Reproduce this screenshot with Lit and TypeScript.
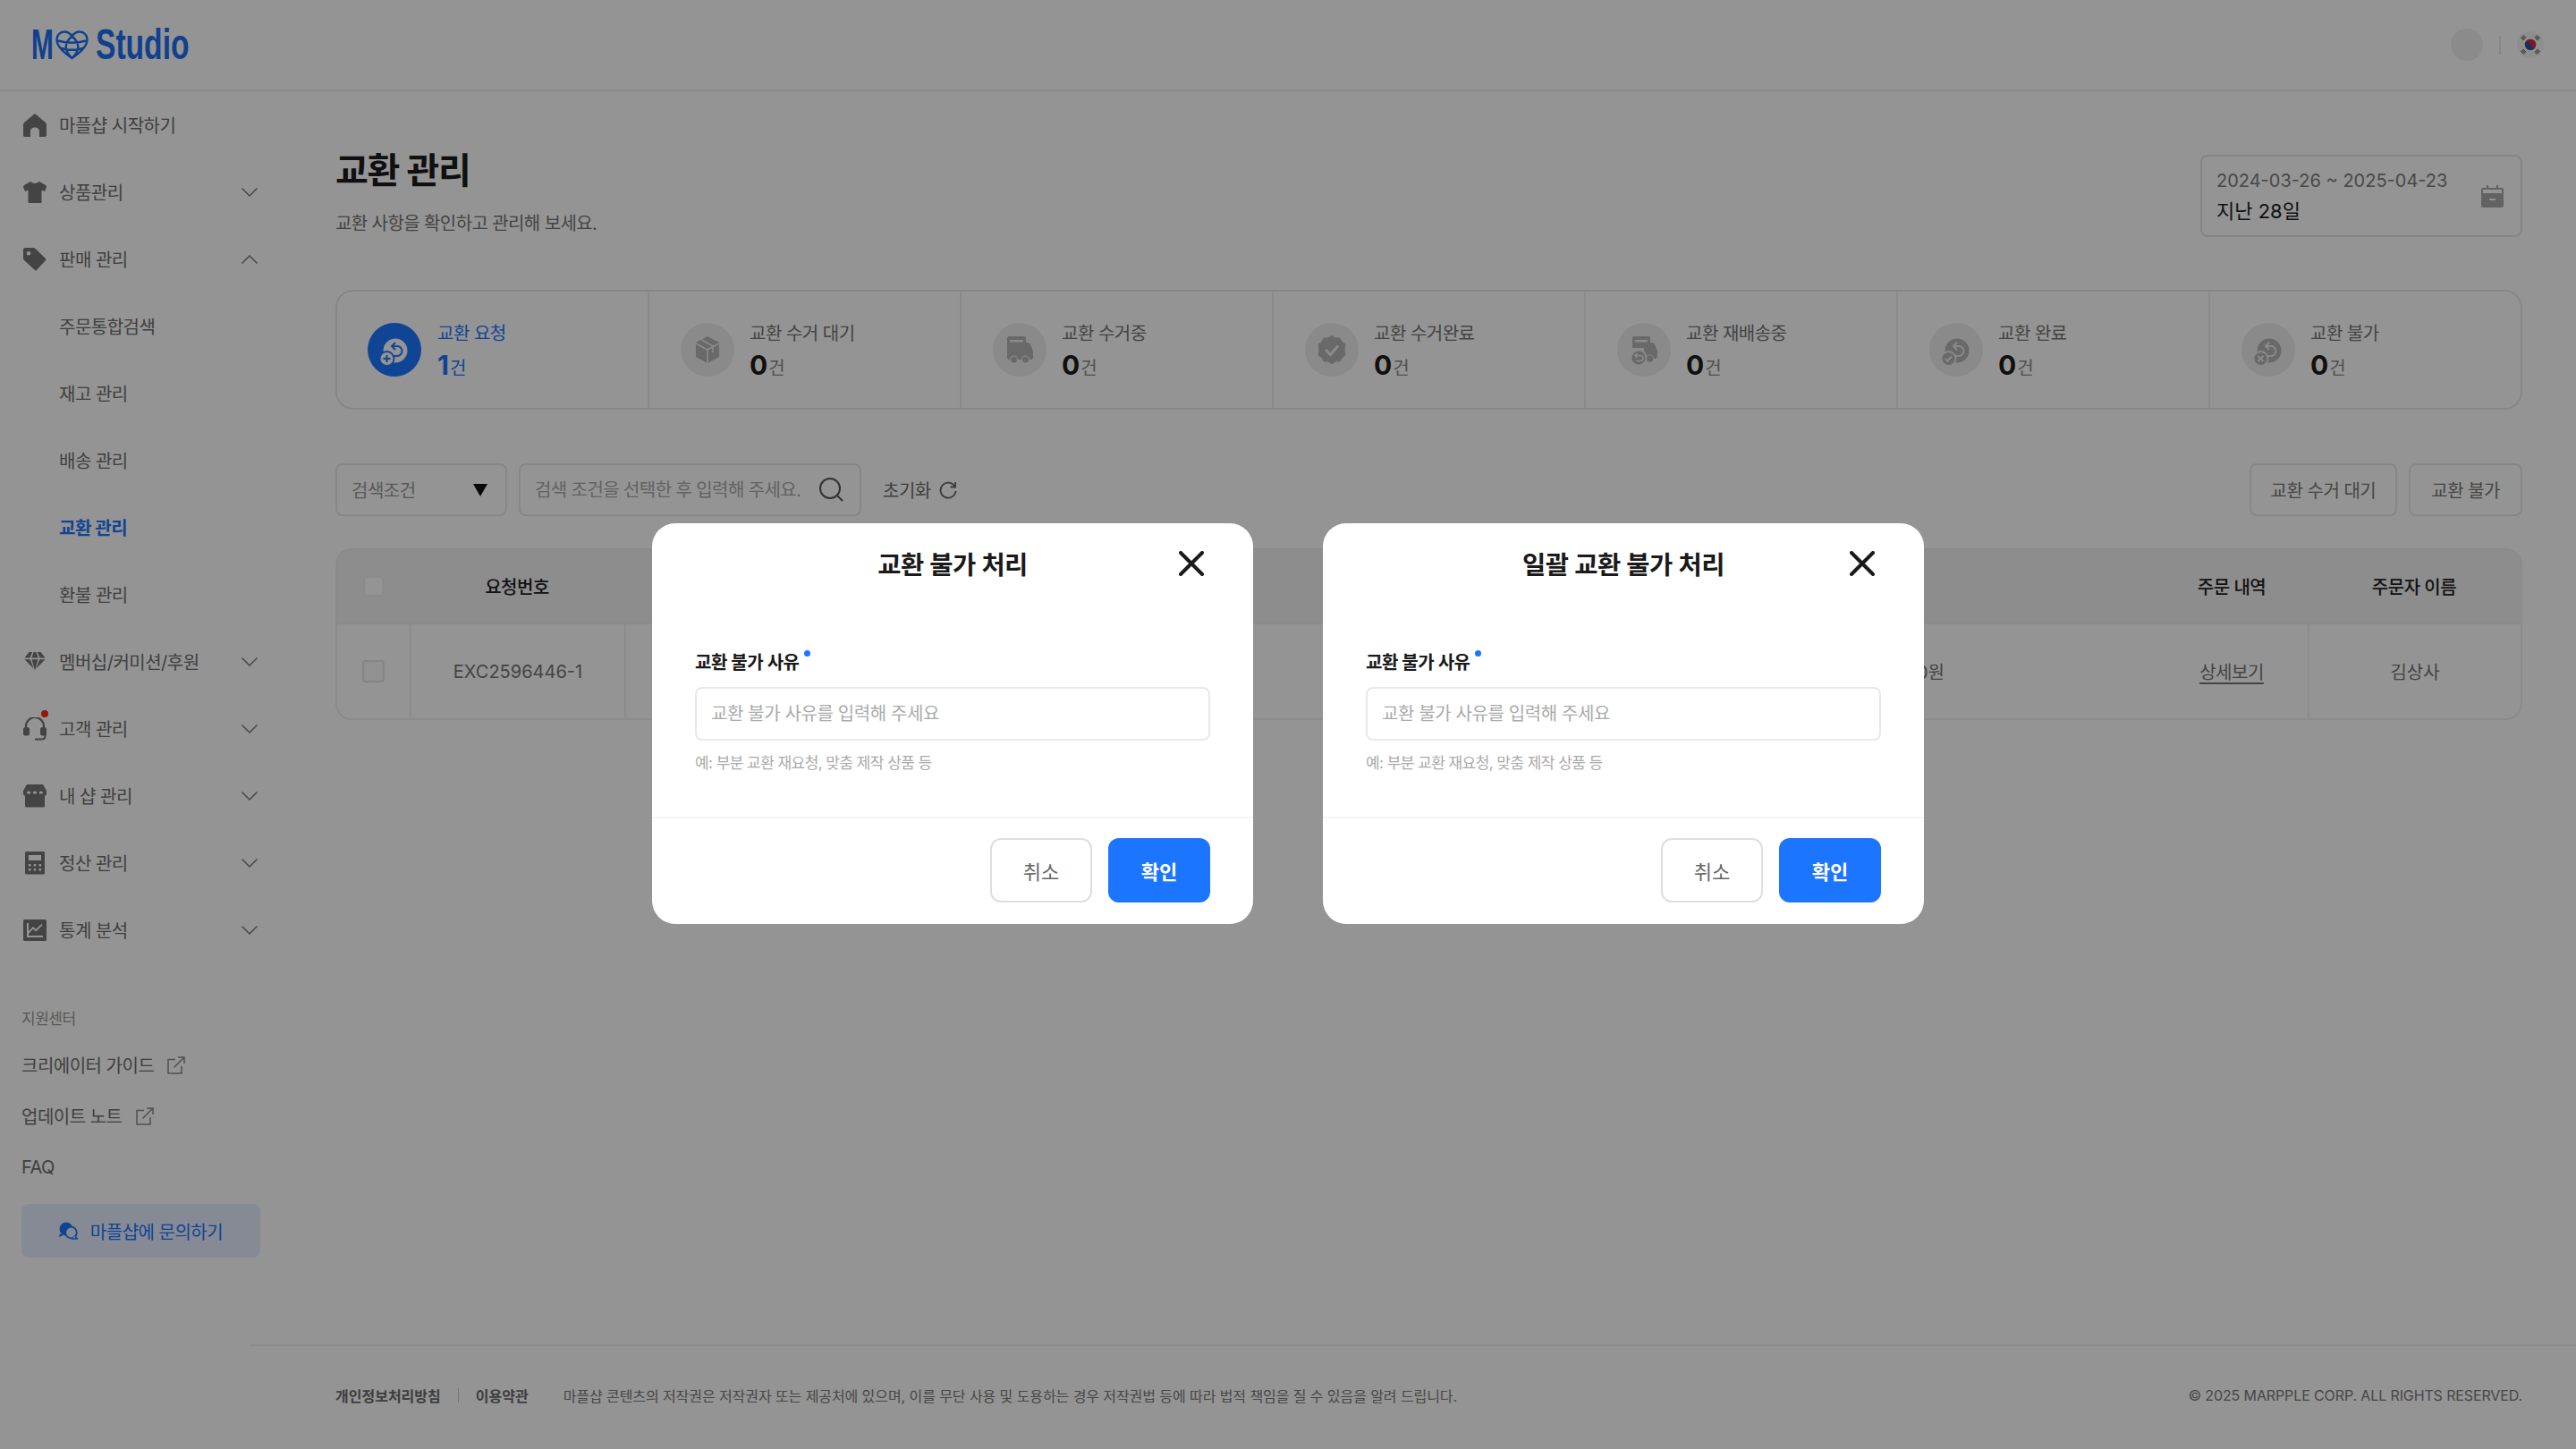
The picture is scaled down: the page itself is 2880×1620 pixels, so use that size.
import { LitElement, html, css, svg } from "lit";
import { customElement } from "lit/decorators.js";

const I = (vb: string, w: number, h: number, body: unknown) =>
  html`<svg width=${w} height=${h} viewBox=${vb} fill="currentColor" xmlns="http://www.w3.org/2000/svg">${body}</svg>`;

const navIcons: Record<string, unknown> = {
  home: I("0 0 26 26", 26, 26, svg`<path fill-rule="evenodd" d="M13 0 L25 10 Q26 11 26 12.5 V24 Q26 26 24 26 H18 V20 Q18 15.5 13 15.5 Q8 15.5 8 20 V26 H2 Q0 26 0 24 V12.5 Q0 11 1 10 Z"/>`),
  tee: I("0 0 26 26", 26, 26, svg`<path d="M8 1 Q13 5 18 1 L25 5 Q26 6 26 7 L24 12 L20.500 10.500 V24 Q20.500 25 19.500 25 H6.500 Q5.500 25 5.500 24 V10.500 L2 12 L0 7 Q0 6 1 5 Z"/>`),
  tag: I("0 0 26 26", 26, 26, svg`<path fill-rule="evenodd" d="M2 0 H11 Q12.500 0 13.500 1 L25 12 Q26 13 25 14 L15 25 Q14 26 13 25 L1 14 Q0 13 0 11.500 V2 Q0 0 2 0 Z M6 4 A2.300 2.300 0 1 0 6 8.600 A2.300 2.300 0 1 0 6 4 Z"/>`),
  gem: I("0 0 26 26", 26, 24, svg`<path d="M6 1 H10 L7 8 H0.500 Z M11.500 1 H14.500 L17 8 H9 Z M16 1 H20 L25.500 8 H19 Z M0.500 10 H7.300 L11.500 21 Z M9.200 10 H16.800 L13 23.500 Z M18.700 10 H25.500 L14.500 21 Z"/>`),
  head: I("0 0 26 26", 26, 26, svg`<path d="M3 12 V10 A10 10 0 0 1 23 10 V12" fill="none" stroke="currentColor" stroke-width="2.200"/><rect x="0" y="11" width="7" height="9.500" rx="2.500"/><rect x="19" y="11" width="7" height="9.500" rx="2.500"/><path d="M24.500 19 V21 Q24.500 24.500 20 24.500 H13" fill="none" stroke="currentColor" stroke-width="2"/>`),
  shop: I("0 0 26 26", 26, 26, svg`<path fill-rule="evenodd" d="M4 0 H22 L26 7 V10 Q26 13 23 13 H24 V24 Q24 25.500 22.500 25.500 H3.500 Q2 25.500 2 24 V13 H3 Q0 13 0 10 V7 Z M4 9 a2.200 1.600 0 1 0 4.400 0 a2.200 1.600 0 1 0 -4.400 0 M10.800 9 a2.200 1.600 0 1 0 4.400 0 a2.200 1.600 0 1 0 -4.400 0 M17.600 9 a2.200 1.600 0 1 0 4.400 0 a2.200 1.600 0 1 0 -4.400 0 Z"/>`),
  calc: I("0 0 26 26", 26, 26, svg`<path fill-rule="evenodd" d="M3.500 0 H22.500 Q24 0 24 1.500 V24 Q24 25.500 22.500 25.500 H3.500 Q2 25.500 2 24 V1.500 Q2 0 3.500 0 Z M6 4 V10 H20 V4 Z M6 14 v2.500 h2.500 v-2.500 Z M11.700 14 v2.500 h2.500 v-2.500 Z M17.500 14 v2.500 h2.500 v-2.500 Z M6 19 v2.500 h2.500 v-2.500 Z M11.700 19 v2.500 h2.500 v-2.500 Z M17.500 19 v2.500 h2.500 v-2.500 Z"/>`),
  chart: I("0 0 26 24", 26, 24, svg`<path fill-rule="evenodd" d="M1.500 0 H24.500 Q26 0 26 1.500 V22.500 Q26 24 24.500 24 H1.500 Q0 24 0 22.500 V1.500 Q0 0 1.500 0 Z M4 4 V20 H22 V18 H6 V16 L11 10.500 L14 13.500 L21.500 6.500 L20.500 5 L14 11 L11 8 L6 13 V4 Z"/>`),
};

const ret = (badge: "plus" | "check" | "x", fg: string, bg: string) => svg`
  <circle cx="31" cy="31" r="13.500" fill=${fg}/>
  <path d="M27 26 H33 A5.500 5.500 0 0 1 33 37 H29 M31 22 L27 26 L31 30" fill="none" stroke=${bg} stroke-width="2"/>
  <circle cx="21.500" cy="40" r="8" fill=${fg} stroke=${bg} stroke-width="1.800"/>
  ${badge === "plus" ? svg`<path d="M17.500 40 H25.500 M21.500 36 V44" stroke=${bg} stroke-width="2"/>` : ""}
  ${badge === "check" ? svg`<path d="M18 40 L20.500 42.500 L25 37.500" fill="none" stroke=${bg} stroke-width="2"/>` : ""}
  ${badge === "x" ? svg`<path d="M18.500 37 L24.500 43 M24.500 37 L18.500 43" stroke=${bg} stroke-width="2"/>` : ""}`;

const G = "#b6b6b6";
const C = "#eeeeee";
const statIcons: unknown[] = [
  ret("plus", "#ffffff", "#1c75ff"),
  svg`<path d="M30 15 L43 22 V38 L30 45 L17 38 V22 Z" fill=${G}/><path d="M17 23 L30 30 L43 23 M30 30 V45 M23 18.500 L36 26 V33" fill="none" stroke=${C} stroke-width="1.600"/>`,
  svg`<path d="M16 17 Q16 15 18 15 H35 Q37 15 37 17 V22 H39 Q41 22 42 24 L45 32 V38 Q45 41 42 41 H41 A4.500 4.500 0 0 0 32 41 H28 A4.500 4.500 0 0 0 19 41 H18 Q16 41 16 39 Z" fill=${G}/><rect x="19" y="19" width="15" height="2.500" fill=${C}/><circle cx="23.500" cy="41" r="3.500" fill=${G}/><circle cx="36.500" cy="41" r="3.500" fill=${G}/>`,
  svg`<path d="M30 14 L34 17 L39 17 L41 21 L45 24 L44 30 L45 36 L41 39 L39 43 L34 43 L30 46 L26 43 L21 43 L19 39 L15 36 L16 30 L15 24 L19 21 L21 17 L26 17 Z" fill=${G} stroke=${G} stroke-linejoin="round" stroke-width="1"/><path d="M23 30 L28.500 35.500 L37 25.500" fill="none" stroke=${C} stroke-width="3"/>`,
  svg`<path d="M17 17 Q17 15 19 15 H35 Q37 15 37 17 V22 H39 Q41 22 42 24 L45 31 V37 Q45 40 42 40 H41 A4.500 4.500 0 0 0 32 40 H30 V28 H17 Z" fill=${G}/><rect x="20" y="19" width="14" height="2.500" fill=${C}/><circle cx="36.500" cy="40" r="3.800" fill=${G}/><circle cx="24" cy="39" r="8.500" fill=${G} stroke=${C} stroke-width="1.800"/><path d="M20 36.500 H26 A3 3 0 0 1 26 42.500 H21 M22.500 34 L20 36.500 L22.500 39" fill="none" stroke=${C} stroke-width="1.600"/>`,
  ret("check", G, C),
  ret("x", G, C),
];

const stats = [
  ["교환 요청", "1"],
  ["교환 수거 대기", "0"],
  ["교환 수거중", "0"],
  ["교환 수거완료", "0"],
  ["교환 재배송중", "0"],
  ["교환 완료", "0"],
  ["교환 불가", "0"],
];

const nav: { t: string; icon?: string; open?: boolean; chev?: boolean; active?: boolean; dot?: boolean }[] = [
  { t: "마플샵 시작하기", icon: "home" },
  { t: "상품관리", icon: "tee", chev: true },
  { t: "판매 관리", icon: "tag", chev: true, open: true },
  { t: "주문통합검색" },
  { t: "재고 관리" },
  { t: "배송 관리" },
  { t: "교환 관리", active: true },
  { t: "환불 관리" },
  { t: "멤버십/커미션/후원", icon: "gem", chev: true },
  { t: "고객 관리", icon: "head", chev: true, dot: true },
  { t: "내 샵 관리", icon: "shop", chev: true },
  { t: "정산 관리", icon: "calc", chev: true },
  { t: "통계 분석", icon: "chart", chev: true },
];

const extIcon = html`<svg width="20" height="20" viewBox="0 0 20 20" fill="none" stroke="currentColor" stroke-width="1.500"><path d="M9 3.500 H1 V19 H16 V11 M7.500 12.500 L19 1 M12 1 H19 V8"/></svg>`;

@customElement("app-root")
export class AppRoot extends LitElement {
  static styles = css`
    :host { display: block; width: 2880px; height: 1620px; position: relative; overflow: hidden; background: #fff;
      font-family: Inter, "Noto Sans CJK KR", sans-serif; letter-spacing: -0.5px; color: #1d1d1d; }
    * { box-sizing: border-box; }
    .hdr { height: 102px; border-bottom: 2px solid #f0f0f0; display: flex; align-items: center; padding: 0 36px 0 35px; }
    .logo { display: flex; align-items: center; color: #1c6ff5; font-family: "Liberation Sans Narrow", "Liberation Sans", sans-serif; font-weight: 700; font-size: 48px; line-height: 48px; letter-spacing: 0; }
    .logo span { display: inline-block; transform-origin: left center; }
    .logo .m { width: 27px; transform: scaleX(.62); }
    .logo .s { width: 103px; margin-left: 8px; transform: scaleX(.7); }
    .hdr-r { margin-left: auto; display: flex; align-items: center; gap: 18px; }
    .avatar { width: 36px; height: 36px; border-radius: 50%; background: #f0f0f0; }
    .sep { width: 2px; height: 21px; background: #e8e8e8; }
    .flag { display: block; }
    .body { display: flex; height: 1518px; }
    .side { width: 300px; flex: none; display: flex; flex-direction: column; }
    .item { height: 75px; display: flex; align-items: center; font-size: 20px; color: #6e6e6e; padding: 0 12px 0 26px; }
    .item.sub { padding-left: 66px; }
    .item.active { color: #1c75ff; font-weight: 600; }
    .ico { width: 26px; height: 26px; margin-right: 14px; color: #757575; position: relative; display: flex; align-items: center; justify-content: center; flex: none; }
    .dot { position: absolute; left: 20px; top: -8px; width: 8px; height: 8px; border-radius: 50%; background: #ff2a10; }
    .chev { margin-left: auto; color: #7d7d7d; display: block; }
    .sup { padding: 50px 0 0 24px; }
    .sup-t { font-size: 17px; line-height: 24px; color: #999; }
    .links { margin-top: 11px; }
    .lnk { height: 57px; display: flex; align-items: center; gap: 15px; font-size: 20px; color: #6e6e6e; }
    .lnk svg { color: #8a8a8a; }
    .ask { margin-top: 13px; width: 267px; height: 60px; border-radius: 8px; background: #e7eeff; color: #1c75ff; display: flex; align-items: center; justify-content: center; gap: 14px; font-size: 20px; }
    .main { flex: 1; display: flex; flex-direction: column; min-width: 0; }
    .content { flex: 1; padding: 65px 60px 0 75px; }
    .top { display: flex; justify-content: space-between; height: 98px; margin-bottom: 59px; }
    h1 { margin: 0; font-size: 40px; line-height: 48px; font-weight: 700; letter-spacing: -1.2px; color: #1d1d1d; }
    .subt { margin-top: 21px; font-size: 20px; line-height: 28px; color: #757575; letter-spacing: -0.6px; }
    .date { margin-top: 6px; width: 360px; height: 92px; border: 2px solid #e6e6e6; border-radius: 8px; padding: 0 19px 0 16px; display: flex; align-items: center; justify-content: space-between; }
    .d1 { font-size: 20px; line-height: 34px; color: #7d7d7d; letter-spacing: 0; }
    .d2 { font-size: 22px; line-height: 34px; color: #1d1d1d; letter-spacing: 0; }
    .cal { color: #aaa; display: block; }
    .stats { height: 134px; border: 2px solid #e8e8e8; border-radius: 20px; display: grid; grid-template-columns: 347px repeat(5, 349px) 1fr; margin-bottom: 60px; }
    .cell { display: flex; align-items: center; padding-left: 35px; gap: 17px; border-left: 2px solid #eeeeee; }
    .cell:first-child { border-left: 0; padding-left: 34px; gap: 18px; }
    .cell svg { display: block; flex: none; }
    .st { padding-top: 10px; }
    .lab { font-size: 20px; line-height: 28px; color: #757575; }
    .val { font-size: 30px; line-height: 42px; font-weight: 700; color: #1d1d1d; display: flex; align-items: baseline; gap: 1px; letter-spacing: 0; }
    .val small { font-size: 20px; font-weight: 400; color: #8a8a8a; }
    .cell.on .lab, .cell.on .val, .cell.on .val small { color: #1c75ff; }
    .bar { display: flex; align-items: center; height: 59px; margin-bottom: 36px; }
    .sel, .srch, .btn { height: 59px; border: 2px solid #e8e8e8; border-radius: 8px; display: flex; align-items: center; font-size: 20px; }
    .sel { width: 192px; padding: 0 20px 0 16px; justify-content: space-between; color: #999; margin-right: 13px; }
    .srch { width: 383px; padding: 0 18px 0 16px; gap: 8px; margin-right: 24px; }
    .srch input { flex: 1; min-width: 0; border: 0; outline: 0; background: none; padding: 0; font: inherit; letter-spacing: -0.6px; }
    .srch input::placeholder { color: #aaa; opacity: 1; }
    .reset { display: flex; align-items: center; gap: 9px; font-size: 20px; color: #6e6e6e; }
    .btns { margin-left: auto; display: flex; gap: 13px; }
    .btn { padding: 0 23px; color: #777; justify-content: center; }
    .btn:first-child { padding: 0 22px; }
    .tbl { border: 2px solid #f0f0f0; border-radius: 18px; height: 192px; overflow: hidden; }
    .tr { display: grid; grid-template-columns: 81px 240px 1542px 170px 170px 1fr; }
    .th { height: 81px; background: #f3f3f3; font-size: 20px; font-weight: 500; color: #222; }
    .th > div, .td > div { display: flex; align-items: center; justify-content: center; }
    .td { height: 107px; border-top: 2px solid #f0f0f0; font-size: 20px; color: #757575; letter-spacing: 0; }
    .td > .ln { border-left: 2px solid #f2f2f2; }
    .tr .price { justify-content: flex-end; padding-right: 66px; }
    .cb { width: 23px; height: 23px; border: 2px solid #f0f0f0; border-radius: 4px; background: #fff; }
    .td .cb { width: 25px; height: 25px; border-color: #e6e6e6; background: #fafafa; }
    .td u { text-underline-offset: 4px; letter-spacing: -0.5px; }
    .ftr { height: 117px; margin-left: -20px; border-top: 2px solid #f0f0f0; padding: 0 60px 5px 95px; display: flex; align-items: center; font-size: 16px; color: #7a7a7a; letter-spacing: -0.08px; }
    .ftr b { font-weight: 600; color: #6a6a6a; letter-spacing: 0; }
    .vr { width: 1px; height: 16px; background: #ccc; margin: 0 19px; }
    .copy { margin-left: 39px; }
    .rights { margin-left: auto; letter-spacing: -0.12px; }
    .overlay { position: absolute; inset: 0; padding-bottom: 2px; background: rgba(0, 0, 0, .42); display: flex; align-items: center; justify-content: center; gap: 78px; }
    .modal { width: 672px; height: 448px; background: #fff; border-radius: 26px; display: flex; flex-direction: column; }
    .m-h { height: 88px; position: relative; display: flex; align-items: center; justify-content: center; font-size: 28.5px; font-weight: 600; color: #1a1a1a; letter-spacing: -0.5px; }
    .x { position: absolute; left: 589px; top: 31px; display: block; }
    .m-b { flex: 1; padding: 0 48px; border-bottom: 2px solid #f5f5f5; }
    .m-l { margin-top: 54px; display: flex; font-size: 20px; line-height: 28px; font-weight: 600; color: #1a1a1a; }
    .req { width: 7px; height: 7px; border-radius: 50%; background: #1c75ff; margin: 0 0 0 6px; }
    .m-i { margin-top: 13px; width: 100%; height: 60px; border: 2px solid #e8e8e8; border-radius: 8px; padding: 0 16px; font: inherit; font-size: 20px; letter-spacing: -0.4px; outline: 0; display: block; }
    .m-i::placeholder { color: #aaa; opacity: 1; }
    .m-n { margin-top: 13px; font-size: 17px; line-height: 24px; color: #aaa; letter-spacing: -0.55px; }
    .m-f { height: 118px; padding: 22px 48px 0 0; display: flex; justify-content: flex-end; gap: 18px; }
    .m-f button { width: 114px; height: 72px; border-radius: 12px; font: inherit; font-size: 22px; letter-spacing: 0; cursor: pointer; }
    .cancel { background: #fff; border: 2px solid #dedede; color: #666; }
    .ok { background: #1c75ff; border: 0; color: #fff; font-weight: 600 !important; }
  `;

  private chevron(open?: boolean) {
    return html`<svg class="chev" width="18" height="10" viewBox="0 0 18 10" fill="none" stroke="currentColor" stroke-width="1.500"><path d=${open ? "M0.500 9.500 L9 1 L17.500 9.500" : "M0.500 0.500 L9 9 L17.500 0.500"}/></svg>`;
  }

  private modal(title: string) {
    return html`<section class="modal">
      <div class="m-h">${title}
        <svg class="x" width="28" height="28" viewBox="0 0 28 28" stroke="#1a1a1a" stroke-width="4" stroke-linecap="round"><path d="M2 2 L26 26 M26 2 L2 26"/></svg>
      </div>
      <div class="m-b">
        <div class="m-l">교환 불가 사유<i class="req"></i></div>
        <input class="m-i" placeholder="교환 불가 사유를 입력해 주세요" />
        <div class="m-n">예: 부분 교환 재요청, 맞춤 제작 상품 등</div>
      </div>
      <div class="m-f"><button class="cancel">취소</button><button class="ok">확인</button></div>
    </section>`;
  }

  private trigram(rot: number) {
    return svg`<g transform="rotate(${rot} 15 15)"><path d="M12.500 2.500 H17.500 M12.500 4 H17.500 M12.500 5.500 H17.500" stroke="#2a2a2a" stroke-width="0.900"/></g>`;
  }

  render() {
    return html`
      <header class="hdr">
        <div class="logo">
          <span class="m">M</span>
          <svg width="37" height="33" viewBox="0 0 37 33" fill="none" stroke="currentColor" stroke-width="2.400">
            <path d="M18.500 31 C8 24 1.500 17 1.500 10 C1.500 5 5.500 1.500 10 1.500 C13.500 1.500 16.500 3.500 18.500 6.500 C20.500 3.500 23.500 1.500 27 1.500 C31.500 1.500 35.500 5 35.500 10 C35.500 17 29 24 18.500 31 Z M3 11.500 Q18.500 16 34 11.500 M6 20 Q18.500 23.500 31 20 M18.500 6.500 Q5 18 18.500 31 Q32 18 18.500 6.500 Z"/>
          </svg>
          <span class="s">Studio</span>
        </div>
        <div class="hdr-r">
          <div class="avatar"></div>
          <div class="sep"></div>
          <svg class="flag" width="30" height="30" viewBox="0 0 30 30">
            <circle cx="15" cy="15" r="15" fill="#f4f4f4"/>
            <circle cx="15" cy="15" r="6.200" fill="#1c5aa8"/>
            <path d="M8.800 15 A6.200 6.200 0 0 1 21.200 15 A3.100 3.100 0 0 1 15 15 A3.100 3.100 0 0 0 8.800 15 Z" fill="#e0283f"/>
            ${this.trigram(45)}${this.trigram(135)}${this.trigram(225)}${this.trigram(315)}
          </svg>
        </div>
      </header>
      <div class="body">
        <aside class="side">
          <nav>
            ${nav.map((n) => html`<div class="item ${n.icon ? "" : "sub"} ${n.active ? "active" : ""}">
              ${n.icon ? html`<span class="ico">${navIcons[n.icon]}${n.dot ? html`<i class="dot"></i>` : ""}</span>` : ""}
              <span>${n.t}</span>
              ${n.chev ? this.chevron(n.open) : ""}
            </div>`)}
          </nav>
          <div class="sup">
            <div class="sup-t">지원센터</div>
            <div class="links">
              <div class="lnk">크리에이터 가이드 ${extIcon}</div>
              <div class="lnk">업데이트 노트 ${extIcon}</div>
              <div class="lnk">FAQ</div>
            </div>
            <div class="ask">
              <svg width="21" height="20" viewBox="0 0 21 20"><circle cx="8" cy="8" r="7.500" fill="currentColor"/><path d="M1 13 L0 17 L5 15 Z" fill="currentColor"/><circle cx="13.500" cy="12" r="6.300" fill="#e7eeff" stroke="currentColor" stroke-width="1.800"/><path d="M18 16 L20.500 19 H14" fill="#e7eeff" stroke="currentColor" stroke-width="1.500"/></svg>
              <span>마플샵에 문의하기</span>
            </div>
          </div>
        </aside>
        <main class="main">
          <div class="content">
            <div class="top">
              <div><h1>교환 관리</h1><div class="subt">교환 사항을 확인하고 관리해 보세요.</div></div>
              <div class="date">
                <div><div class="d1">2024-03-26 ~ 2025-04-23</div><div class="d2">지난 28일</div></div>
                <svg class="cal" width="25" height="25" viewBox="0 0 25 25"><path fill="currentColor" fill-rule="evenodd" d="M6 0 H8 V3 H17 V0 H19 V3 H23 Q25 3 25 5 V23 Q25 25 23 25 H2 Q0 25 0 23 V5 Q0 3 2 3 H6 Z M2 5 V9 H23 V5 Z M9 15 V17 H16 V15 Z"/></svg>
              </div>
            </div>
            <div class="stats">
              ${stats.map(([l, v], i) => html`<div class="cell ${i === 0 ? "on" : ""}">
                <svg width="60" height="60" viewBox="0 0 60 60"><circle cx="30" cy="30" r="30" fill=${i === 0 ? "#1c75ff" : "#eeeeee"}/>${statIcons[i]}</svg>
                <div class="st"><div class="lab">${l}</div><div class="val">${v}<small>건</small></div></div>
              </div>`)}
            </div>
            <div class="bar">
              <div class="sel"><span>검색조건</span><svg width="16" height="14" viewBox="0 0 16 14"><path d="M0 0 H16 L8 14 Z" fill="#111"/></svg></div>
              <div class="srch"><input placeholder="검색 조건을 선택한 후 입력해 주세요." /><svg width="27" height="27" viewBox="0 0 27 27" fill="none" stroke="#555" stroke-width="2"><circle cx="12" cy="12" r="11"/><path d="M20 20 L26 26"/></svg></div>
              <div class="reset"><span>초기화</span><svg width="20" height="20" viewBox="0 0 20 20" fill="none" stroke="#666" stroke-width="1.800"><path d="M17.500 6 A8.500 8.500 0 1 0 18.500 11"/><path d="M18 1 V6.500 H12.500"/></svg></div>
              <div class="btns"><div class="btn">교환 수거 대기</div><div class="btn">교환 불가</div></div>
            </div>
            <div class="tbl">
              <div class="tr th"><div><i class="cb"></i></div><div>요청번호</div><div></div><div></div><div>주문 내역</div><div>주문자 이름</div></div>
              <div class="tr td"><div><i class="cb"></i></div><div class="ln">EXC2596446-1</div><div class="ln price">29,000원</div><div></div><div><u>상세보기</u></div><div class="ln">김상사</div></div>
            </div>
          </div>
          <footer class="ftr">
            <b>개인정보처리방침</b><i class="vr"></i><b>이용약관</b>
            <span class="copy">마플샵 콘텐츠의 저작권은 저작권자 또는 제공처에 있으며, 이를 무단 사용 및 도용하는 경우 저작권법 등에 따라 법적 책임을 질 수 있음을 알려 드립니다.</span>
            <span class="rights">© 2025 MARPPLE CORP. ALL RIGHTS RESERVED.</span>
          </footer>
        </main>
      </div>
      <div class="overlay">
        ${this.modal("교환 불가 처리")}
        ${this.modal("일괄 교환 불가 처리")}
      </div>
    `;
  }
}
